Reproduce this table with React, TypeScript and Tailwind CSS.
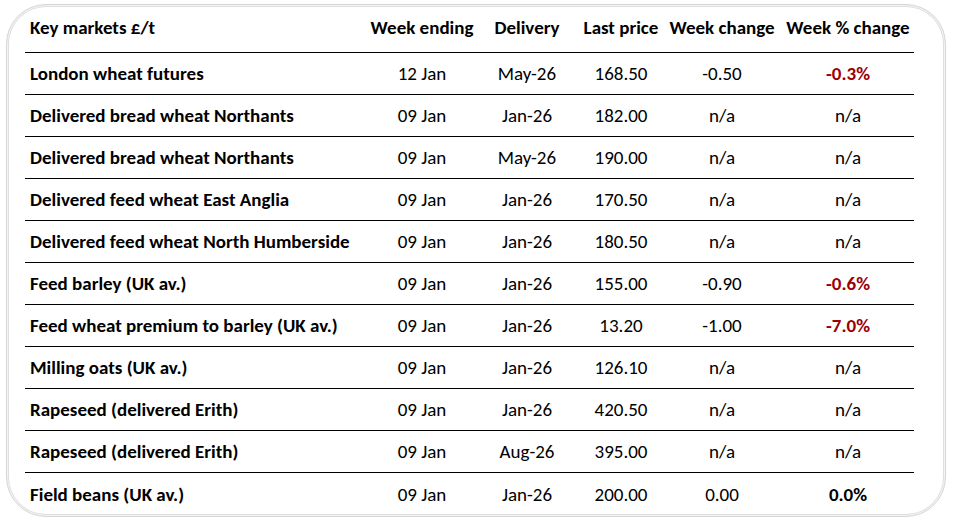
const rows = [
  ["London wheat futures", "12 Jan", "May-26", "168.50", "-0.50", "-0.3%"],
  ["Delivered bread wheat Northants", "09 Jan", "Jan-26", "182.00", "n/a", "n/a"],
  ["Delivered bread wheat Northants", "09 Jan", "May-26", "190.00", "n/a", "n/a"],
  ["Delivered feed wheat East Anglia", "09 Jan", "Jan-26", "170.50", "n/a", "n/a"],
  ["Delivered feed wheat North Humberside", "09 Jan", "Jan-26", "180.50", "n/a", "n/a"],
  ["Feed barley (UK av.)", "09 Jan", "Jan-26", "155.00", "-0.90", "-0.6%"],
  ["Feed wheat premium to barley (UK av.)", "09 Jan", "Jan-26", "13.20", "-1.00", "-7.0%"],
  ["Milling oats (UK av.)", "09 Jan", "Jan-26", "126.10", "n/a", "n/a"],
  ["Rapeseed (delivered Erith)", "09 Jan", "Jan-26", "420.50", "n/a", "n/a"],
  ["Rapeseed (delivered Erith)", "09 Jan", "Aug-26", "395.00", "n/a", "n/a"],
  ["Field beans (UK av.)", "09 Jan", "Jan-26", "200.00", "0.00", "0.0%"],
];

const grid = "grid grid-cols-[345px_104px_106px_82px_120px_132px] items-center whitespace-nowrap";

function pctClass(v: string) {
  if (v === "n/a") return "font-normal text-black";
  if (v.startsWith("-")) return "font-bold text-[#9c0006]";
  return "font-bold text-black";
}

export default function App() {
  return (
    <div
      className="w-[953px] h-[522px] bg-white pt-[4px] pl-[6px] text-black text-[19px] leading-none"
      style={{ fontFamily: "Carlito, Lato, 'Liberation Sans', sans-serif" }}
    >
      <div className="w-[940px] h-[513px] rounded-[40px] border border-[#d6d6d6] shadow-[inset_0_0_0_1px_#f4f4f4,inset_0_0_0_2px_#dedede] pl-[18px] pt-[1px]">
        <div className={`${grid} h-[47px] pb-[3px] font-bold border-b-[1.5px] border-black w-[889px]`}>
          <div className="pl-[5px]">Key markets £/t</div>
          <div className="text-center">Week ending</div>
          <div className="text-center">Delivery</div>
          <div className="text-center">Last price</div>
          <div className="text-center">Week change</div>
          <div className="text-center">Week % change</div>
        </div>
        {rows.map((r, i) => (
          <div
            key={i}
            className={`${grid} h-[42px] w-[889px] ${i < rows.length - 1 ? "border-b-[1.5px] border-black" : ""}`}
          >
            <div className="pl-[5px] font-bold">{r[0]}</div>
            <div className="text-center">{r[1]}</div>
            <div className="text-center">{r[2]}</div>
            <div className="text-center">{r[3]}</div>
            <div className="text-center">{r[4]}</div>
            <div className={`text-center ${pctClass(r[5])}`}>{r[5]}</div>
          </div>
        ))}
      </div>
    </div>
  );
}
